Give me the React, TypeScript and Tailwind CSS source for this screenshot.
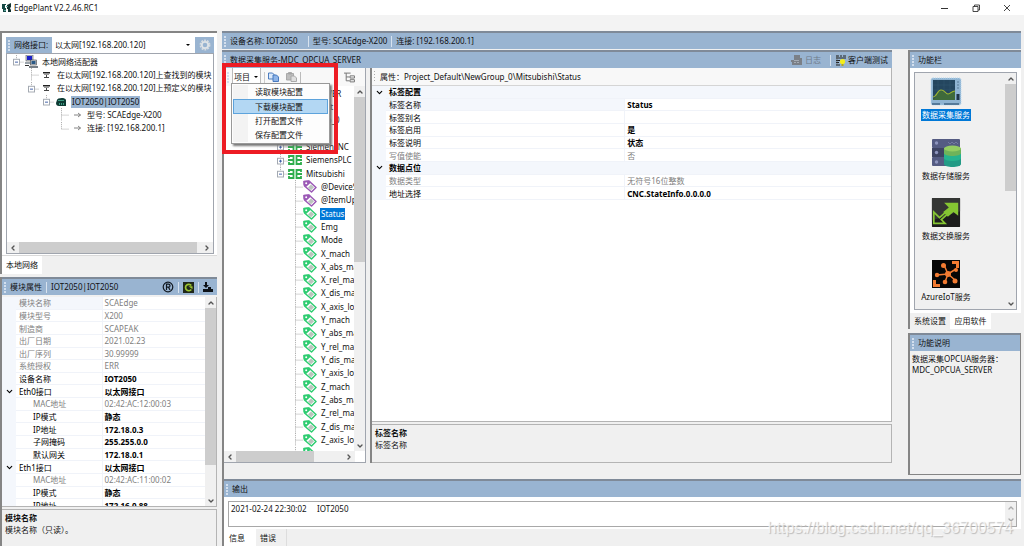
import { useState } from "react";
import type { ReactNode } from "react";
import { ChevronDown, ChevronLeft, ChevronRight, ChevronUp } from "lucide-react";

type Row = {
  label: string;
  value?: string;
  level?: number;
  group?: boolean;
  readOnly?: boolean;
  plain?: boolean;
  shade?: boolean;
};

type Node = {
  // one letter per column: v = line, t = branch, l = last branch, p = plus, m = minus, o = minus at the end
  lines: string;
  icon: ReactNode;
  text: string;
  selected?: "soft" | "strong";
};

/* ---------- icons ---------- */

function AppIcon() {
  return (
    <svg viewBox="0 0 10 10" className="size-[10px]" aria-hidden="true">
      <path d="M0 1h4v1H3v3h1v4H1V6H0z" fill="#164a45" />
      <path d="M5 2l4-2v4l-1 1 1 2v2H6V6H5z" fill="#12312f" />
      <path d="M4 3h2v1H4zM2 7h2v1H2z" fill="#5aa79d" />
    </svg>
  );
}

function NetworkIcon() {
  return (
    <svg viewBox="0 0 14 13" className="h-[13px] w-[14px]" aria-hidden="true">
      <rect x="2" y="0" width="7" height="6" fill="#c9cfd6" stroke="#555" strokeWidth="0.6" />
      <rect x="3" y="1" width="5" height="4" fill="#1a21c9" />
      <path d="M1 7h8v2H1z" fill="#9aa3ab" />
      <rect x="6.5" y="5" width="6" height="5" fill="#c9cfd6" stroke="#444" strokeWidth="0.6" />
      <rect x="7.5" y="6" width="4" height="3" fill="#2c5a86" />
      <path d="M5 11h9v2H5z" fill="#777f87" />
      <path d="M1 10.5h4" stroke="#333" />
    </svg>
  );
}

function PortIcon() {
  return (
    <svg viewBox="0 0 14 10" className="h-[10px] w-[14px]" aria-hidden="true">
      <path d="M4 2h7v1.500H4z" fill="#222" />
      <path d="M5 4h5v1H5z" fill="#999" />
      <path d="M7 5h1v2h2v1H5V7h2z" fill="#444" />
    </svg>
  );
}

function ModuleIcon() {
  return (
    <svg viewBox="0 0 14 12" className="h-[12px] w-[14px]" aria-hidden="true">
      <path d="M3 4c0-2 8-3 9 0v6H5c-2 0-3-1-3-3z" fill="#0d3b34" />
      <path d="M4 4h6v1H4zM5 7h1v2H5zM7 7h1v2H7zM9 7h1v2H9z" fill="#3f9c84" />
    </svg>
  );
}

function ArrowIcon() {
  return (
    <svg viewBox="0 0 14 10" className="h-[10px] w-[14px]" fill="none" stroke="#777" strokeWidth="0.9" aria-hidden="true">
      <path d="M5 5h6.500M9 3l2.500 2L9 7" />
    </svg>
  );
}

function DeviceIcon() {
  return (
    <svg viewBox="0 0 14 10" className="h-[10px] w-[14px]" fill="none" stroke="#2fae4d" strokeWidth="1.8" aria-hidden="true">
      <path d="M1 3V1h4.500v8H1V7M13 3V1H8.500v8H13V7M0 5h5M9 5h5" />
    </svg>
  );
}

function TagIcon({ color }: { color: string }) {
  return (
    <svg viewBox="0 0 14 13" className="h-[13px] w-[14px]" aria-hidden="true">
      <path d="M1 1.500L6 1l7 6.500L8.500 12 1.500 6z" fill="#fff" stroke={color} strokeWidth="1.500" strokeLinejoin="round" />
      <path d="M0.500 1L6 0.500l2 2L3 7 0.500 5z" fill={color} />
      <circle cx="3.200" cy="3.200" r="1" fill="#fff" />
      <path d="M8 4.500l3 2.700-3 3-3-2.700z" fill="#bcc4be" />
    </svg>
  );
}

function GearIcon() {
  return (
    <svg viewBox="0 0 12 12" className="size-[12px]" fill="none" aria-hidden="true">
      <circle cx="6" cy="6" r="4.700" stroke="#d7dce1" strokeWidth="1.500" strokeDasharray="1.900 1.050" />
      <circle cx="6" cy="6" r="3.200" stroke="#dfe3e7" strokeWidth="1.800" />
    </svg>
  );
}

function CopyIcon() {
  return (
    <svg viewBox="0 0 11 10" className="h-[10px] w-[11px]" fill="#d9e8fa" stroke="#3b6fb8" strokeWidth="0.9" aria-hidden="true">
      <path d="M0.500 1h4l1.500 1.500V7H0.500z" />
      <path d="M5 3h3.500L10.500 5v4.500H5z" fill="#8db4e8" />
    </svg>
  );
}

function PasteIcon() {
  return (
    <svg viewBox="0 0 11 10" className="h-[10px] w-[11px]" fill="#bdbdbd" stroke="#a3a3a3" strokeWidth="0.9" aria-hidden="true">
      <path d="M0.500 1.500h7V8h-7zM2.500 0.500h3v1.500h-3z" />
      <path d="M5 4h3.500L10.500 6v3.500H5z" fill="#dedede" />
    </svg>
  );
}

function TreeToolIcon() {
  return (
    <svg viewBox="0 0 10 10" className="size-[11px]" fill="none" stroke="#777" strokeWidth="0.9" aria-hidden="true">
      <path d="M0 1h6M2 1v7h3M2 4.500h3M5.500 3.500h4v2h-4zM5.500 7h4v2h-4z" />
    </svg>
  );
}

function LogIcon() {
  return (
    <svg viewBox="0 0 11 10" className="h-[10px] w-[11px]" aria-hidden="true">
      <path d="M3 0h6v3h2v7H1V7H0V5h3z" fill="#7b8087" />
      <path d="M3 5.500h5M3 7.500h2m1 0h2" stroke="#a5acb5" />
    </svg>
  );
}

function ClientIcon() {
  return (
    <svg viewBox="0 0 11 11" className="size-[11px]" aria-hidden="true">
      <path d="M1 1h3M5 1h2M8 1h3M1 3h10M1 5.500h4M1 7.500h3M1 10h4" stroke="#222" strokeWidth="1.100" />
      <path d="M2 0v10" stroke="#555" strokeWidth="0.600" />
      <circle cx="7.500" cy="6.500" r="2.600" fill="#f4ee1b" />
      <path d="M6.500 9h2v2h-2z" fill="#b5a51b" />
    </svg>
  );
}

function RegisteredIcon() {
  return (
    <svg viewBox="0 0 12 12" className="size-[12px]" fill="none" stroke="#101820" strokeWidth="1.200" aria-hidden="true">
      <circle cx="6" cy="6" r="4.800" />
      <path d="M4.500 9V3.200h2a1.500 1.500 0 010 3h-2m2 0L8 9" />
    </svg>
  );
}

function RefreshIcon() {
  return (
    <svg viewBox="0 0 11 11" className="size-[11px]" aria-hidden="true">
      <rect width="11" height="11" fill="#20281a" />
      <path d="M8.300 3.600A3.200 3.200 0 108.300 7.500" fill="none" stroke="#9bc531" strokeWidth="1.700" />
      <path d="M5.500 4.200h4v3z" fill="#9bc531" />
    </svg>
  );
}

function DownloadIcon() {
  return (
    <svg viewBox="0 0 10 10" className="size-[10px]" fill="#0d1218" aria-hidden="true">
      <path d="M2 0h2v3h2L3 6 0 3h2zM0 7h10v3H0zM5 5h3v2H5z" />
    </svg>
  );
}

function ScopeIcon() {
  return (
    <svg viewBox="0 0 32 30" className="h-[30px] w-[32px]" aria-hidden="true">
      <rect x="1" y="1" width="30" height="27" rx="2" fill="#8fb4d2" stroke="#b5d6ee" strokeDasharray="1 1" />
      <rect x="3" y="3" width="22" height="20" fill="#24465f" />
      <path d="M3 8h22M3 13h22M3 18h22M8 3v20M14 3v20M20 3v20" stroke="#31566f" strokeWidth="0.600" />
      <path d="M3 22c4-1 3-8 8-8 4 0 3 4 7 3 3-1 3-3 7-3v9H3z" fill="#3f6a3a" />
      <path d="M3 20c4 0 4-7 8-7s4 4 7 4 3-3 7-3" fill="none" stroke="#9db62f" strokeWidth="1.200" />
      <path d="M27 5h2M27 8h2M27 11h2" stroke="#587b97" />
      <rect x="26.500" y="17" width="3" height="6" fill="#1f3548" />
      <path d="M2 27h8M14 27h15" stroke="#416685" strokeWidth="1.500" />
    </svg>
  );
}

function StorageIcon() {
  return (
    <svg viewBox="0 0 32 30" className="h-[30px] w-[32px]" aria-hidden="true">
      <rect x="2" y="1" width="28" height="9" rx="1" fill="#545b82" />
      <rect x="2" y="10" width="28" height="9" fill="#3d4362" />
      <rect x="2" y="19" width="28" height="9" rx="1" fill="#545b82" />
      <path d="M18 4l2 2 2-2 2 2 2-2 2 2" fill="none" stroke="#7279a0" />
      <g fill="#8d94bd">
        <circle cx="6.500" cy="5" r="1.700" />
        <circle cx="6.500" cy="14.500" r="1.700" />
        <circle cx="6.500" cy="24" r="1.700" />
      </g>
      <path d="M14 11v15c0 4 17 4 17 0V11z" fill="#239b86" />
      <path d="M14 10v10c0 4 17 4 17 0V10z" fill="#26b38f" />
      <path d="M14 10v5c0 4 17 4 17 0v-5z" fill="#6fb35a" />
      <ellipse cx="22.500" cy="10.500" rx="8.500" ry="3" fill="#94cc62" />
    </svg>
  );
}

function ExchangeIcon() {
  return (
    <svg viewBox="0 0 32 32" className="h-[30px] w-[32px]" aria-hidden="true">
      <rect x="1" y="0" width="30" height="31" rx="1" fill="#1c1d1c" />
      <path d="M1 0h30v14L1 24z" fill="#343634" />
      <path d="M14 5h15v14l-5-4-6 5-5-5 6-5z" fill="#85c632" />
      <path d="M3 15v12h12l-4-4 8-7-2-2-8 7z" fill="none" stroke="#85c632" strokeWidth="1.800" />
    </svg>
  );
}

function AzureIcon() {
  return (
    <svg viewBox="0 0 32 30" className="h-[30px] w-[32px]" aria-hidden="true">
      <rect x="2" y="1" width="28" height="28" fill="#060606" />
      <g stroke="#f27b32" strokeWidth="1.500">
        <path d="M18 15L14 6M18 15L7 16M18 15l8-5M18 15l-3 8M18 15l7 6" />
      </g>
      <g fill="#f27b32">
        <circle cx="18" cy="15" r="3" />
        <circle cx="13.500" cy="6.500" r="2.500" />
        <circle cx="7" cy="16" r="2.200" />
        <circle cx="26" cy="11" r="2" />
        <circle cx="15" cy="23" r="2.300" />
        <circle cx="25" cy="22" r="2.500" />
        <path d="M22 2h7v7h-3V5h-4zM3 21h3v4h4v3H3z" />
      </g>
    </svg>
  );
}

/* ---------- shared parts ---------- */

function Grip() {
  return (
    <svg viewBox="0 0 2 11" className="h-[11px] w-[2px] shrink-0" fill="#d3dfee" aria-hidden="true">
      <path d="M0 0h2v2H0zM0 3h2v2H0zM0 6h2v2H0zM0 9h2v2H0z" />
    </svg>
  );
}

function PanelHeader({ children }: { children: ReactNode }) {
  return (
    <header className="flex h-[18px] shrink-0 items-center gap-1 border-t-2 border-[#7f8a98] bg-[#99b4d1] pr-1 pl-0.5 whitespace-nowrap">
      <Grip />
      {children}
    </header>
  );
}

function Divider() {
  return <span className="h-[11px] w-px shrink-0 bg-[#d8e3ef]" />;
}

function VerticalScroll({ thumb }: { thumb: string }) {
  return (
    <div className="flex w-[11px] shrink-0 flex-col items-center bg-[#f0f0f0] text-[#555]">
      <button type="button" aria-label="向上滚动" className="flex h-[11px] items-center">
        <ChevronUp size={8} strokeWidth={4} />
      </button>
      <div className="flex min-h-0 w-full flex-1 flex-col">
        <div className={`w-full bg-[#cdcdcd] ${thumb}`} />
      </div>
      <button type="button" aria-label="向下滚动" className="flex h-[11px] items-center">
        <ChevronDown size={8} strokeWidth={4} />
      </button>
    </div>
  );
}

function HorizontalScroll({ thumb }: { thumb: string }) {
  return (
    <div className="flex h-[11px] shrink-0 items-center bg-[#f0f0f0] text-[#555]">
      <button type="button" aria-label="向左滚动" className="flex w-[12px] justify-center">
        <ChevronLeft size={8} strokeWidth={4} />
      </button>
      <div className="flex h-full min-w-0 flex-1">
        <div className={`h-full bg-[#cdcdcd] ${thumb}`} />
      </div>
      <button type="button" aria-label="向右滚动" className="flex w-[12px] justify-center">
        <ChevronRight size={8} strokeWidth={4} />
      </button>
    </div>
  );
}

function TreeCell({ kind }: { kind: string }) {
  const box = kind === "p" || kind === "m" || kind === "o";
  const below = kind === "v" || kind === "t" || kind === "p" || kind === "m";
  return (
    <svg viewBox="0 0 15 14" preserveAspectRatio="none" className="h-full w-[15px] shrink-0" fill="none" aria-hidden="true">
      {kind !== " " && (
        <g stroke="#a8a8a8" strokeDasharray="1 1">
          <path d={below ? "M7.500 0v14" : "M7.500 0v7"} />
          {kind !== "v" && <path d="M7.500 7.500H15" />}
        </g>
      )}
      {box && <rect x="4.500" y="4.500" width="6" height="6" fill="#fff" stroke="#a3a9b1" />}
      {box && <path d={kind === "p" ? "M6 7.500h3M7.500 6v3" : "M6 7.500h3"} stroke="#4361a8" />}
    </svg>
  );
}

function Tree({ nodes, className }: { nodes: Node[]; className: string }) {
  return (
    <ul className={`grid auto-rows-fr whitespace-nowrap ${className}`}>
      {nodes.map((node, i) => (
        <li key={i} className="flex items-center">
          {node.lines.split("").map((kind, j) => (
            <TreeCell key={j} kind={kind} />
          ))}
          <span className="w-[15px] shrink-0">{node.icon}</span>
          <span
            className={
              node.selected === "strong"
                ? "ml-0.5 bg-[#0078d7] px-px text-white"
                : node.selected === "soft"
                  ? "ml-0.5 bg-[#99b4d1] px-px"
                  : "px-[3px]"
            }
          >
            {node.text}
          </span>
        </li>
      ))}
    </ul>
  );
}

function PropertyTable({ rows, className, labelCol }: { rows: Row[]; className: string; labelCol: string }) {
  return (
    <table className={`w-full table-fixed border-collapse leading-[11px] whitespace-nowrap ${className}`}>
      <colgroup>
        <col className="w-[14px]" />
        <col className={labelCol} />
        <col />
      </colgroup>
      <tbody>
        {rows.map((row, i) => {
          const tone = row.readOnly ? "text-[#808080]" : "text-black";
          const head = row.group && !row.value;
          return (
            <tr key={i} className={tone}>
              <td className="bg-[#f4f7fc] p-0">
                {row.group && (
                  <button type="button" aria-label="折叠" className="flex w-full justify-center">
                    <ChevronDown size={9} strokeWidth={3} />
                  </button>
                )}
              </td>
              <th
                scope="row"
                colSpan={head ? 2 : 1}
                className={`border-b border-[#f0f3f9] p-0 text-left ${row.level ? "pl-[17px]" : "pl-[3px]"} ${head ? "font-bold" : "font-normal"} ${row.shade || head ? "bg-[#f4f7fc]" : ""}`}
              >
                {row.label}
              </th>
              {!head && (
                <td className={`border-b border-l border-[#f0f3f9] p-0 pl-0.5 ${row.readOnly || row.plain ? "" : "font-bold"}`}>
                  {row.value}
                </td>
              )}
            </tr>
          );
        })}
      </tbody>
    </table>
  );
}

/* ---------- data ---------- */

const networkNodes: Node[] = [
  { lines: "o", icon: <NetworkIcon />, text: "本地网络适配器" },
  { lines: " t", icon: <PortIcon />, text: "在以太网[192.168.200.120]上查找到的模块" },
  { lines: " o", icon: <PortIcon />, text: "在以太网[192.168.200.120]上预定义的模块" },
  { lines: "  o", icon: <ModuleIcon />, text: "IOT2050|IOT2050", selected: "soft" },
  { lines: "   t", icon: <ArrowIcon />, text: "型号: SCAEdge-X200" },
  { lines: "   l", icon: <ArrowIcon />, text: "连接: [192.168.200.1]" },
];

const tags = [
  "Status", "Emg", "Mode",
  "X_mach", "X_abs_mach", "X_rel_mach", "X_dis_mach", "X_axis_load",
  "Y_mach", "Y_abs_mach", "Y_rel_mach", "Y_dis_mach", "Y_axis_load",
  "Z_mach", "Z_abs_mach", "Z_rel_mach", "Z_dis_mach", "Z_axis_load",
  "",
];

const serviceNodes: Node[] = [
  { lines: "o", icon: <DeviceIcon />, text: "MDC_OPCUA_SERVER" },
  { lines: " o", icon: <DeviceIcon />, text: "Project_Default" },
  { lines: "  o", icon: <DeviceIcon />, text: "NewGroup_0" },
  { lines: "   p", icon: <DeviceIcon />, text: "" },
  { lines: "   p", icon: <DeviceIcon />, text: "SiemensNC" },
  { lines: "   p", icon: <DeviceIcon />, text: "SiemensPLC" },
  { lines: "   o", icon: <DeviceIcon />, text: "Mitsubishi" },
  { lines: "    t", icon: <TagIcon color="#9b59b6" />, text: "@DeviceState" },
  { lines: "    t", icon: <TagIcon color="#9b59b6" />, text: "@ItemUpdate" },
  ...tags.map((text): Node => ({
    lines: "    t",
    icon: <TagIcon color="#2ecc71" />,
    text,
    selected: text === "Status" ? "strong" : undefined,
  })),
];

const moduleRows: Row[] = [
  { label: "模块名称", value: "SCAEdge", readOnly: true, shade: true },
  { label: "模块型号", value: "X200", readOnly: true },
  { label: "制造商", value: "SCAPEAK", readOnly: true },
  { label: "出厂日期", value: "2021.02.23", readOnly: true },
  { label: "出厂序列", value: "30.99999", readOnly: true },
  { label: "系统授权", value: "ERR", readOnly: true },
  { label: "设备名称", value: "IOT2050" },
  { label: "Eth0接口", value: "以太网接口", group: true },
  { label: "MAC地址", value: "02:42:AC:12:00:03", level: 1, readOnly: true },
  { label: "IP模式", value: "静态", level: 1 },
  { label: "IP地址", value: "172.18.0.3", level: 1 },
  { label: "子网掩码", value: "255.255.0.0", level: 1 },
  { label: "默认网关", value: "172.18.0.1", level: 1 },
  { label: "Eth1接口", value: "以太网接口", group: true },
  { label: "MAC地址", value: "02:42:AC:11:00:02", level: 1, readOnly: true },
  { label: "IP模式", value: "静态", level: 1 },
  { label: "IP地址", value: "172.16.0.88", level: 1 },
];

const tagRows: Row[] = [
  { label: "标签配置", group: true },
  { label: "标签名称", value: "Status", shade: true },
  { label: "标签别名", value: "" },
  { label: "标签启用", value: "是" },
  { label: "标签说明", value: "状态" },
  { label: "写值使能", value: "否", readOnly: true },
  { label: "数据点位", group: true },
  { label: "数据类型", value: "无符号16位整数", readOnly: true },
  { label: "地址选择", value: "CNC.StateInfo.0.0.0.0" },
];

const services = [
  { name: "数据采集服务", icon: <ScopeIcon /> },
  { name: "数据存储服务", icon: <StorageIcon /> },
  { name: "数据交换服务", icon: <ExchangeIcon /> },
  { name: "AzureIoT服务", icon: <AzureIcon /> },
];

const menuItems = ["读取模块配置", "下载模块配置", "打开配置文件", "保存配置文件"];

/* ---------- panels ---------- */

function TitleBar() {
  return (
    <div className="flex h-[15px] shrink-0 items-center bg-white pr-3 pl-0.5">
      <AppIcon />
      <h1 className="ml-0.5 flex-1">EdgePlant V2.2.46.RC1</h1>
      <div className="flex gap-[21px] text-[#333]">
        <button type="button" aria-label="最小化">
          <svg viewBox="0 0 10 8" className="h-2 w-2.5" stroke="currentColor"><path d="M1 4.500h7" /></svg>
        </button>
        <button type="button" aria-label="还原">
          <svg viewBox="0 0 10 8" className="h-2 w-2.5" fill="none" stroke="currentColor" strokeWidth="0.900">
            <path d="M2 2.500h5v5H2zM3.500 2.500v-1.500h5v5H7" />
          </svg>
        </button>
        <button type="button" aria-label="关闭">
          <svg viewBox="0 0 10 8" className="h-2 w-2.5" stroke="currentColor" strokeWidth="0.900"><path d="M2 1l6 6M8 1L2 7" /></svg>
        </button>
      </div>
    </div>
  );
}

function NetworkPanel() {
  return (
    <section className="flex min-h-0 flex-1 flex-col border-t-2 border-l-2 border-[#858585]">
      <div className="flex min-h-0 flex-1 flex-col border-b border-[#d9d9d9] bg-white pt-1 pr-[3px] pb-px pl-1">
        <div className="flex h-4 shrink-0 items-center">
          <label htmlFor="adapter" className="flex h-full w-[46px] items-center gap-1 bg-[#99b4d1] pl-0.5 whitespace-nowrap">
            <Grip />
            网络接口:
          </label>
          <div className="relative h-full flex-1">
            <select id="adapter" className="h-full w-full appearance-none bg-white pl-[3px] leading-[14px] outline-none">
              <option>以太网[192.168.200.120]</option>
            </select>
            <span className="pointer-events-none absolute top-[7px] right-[5px] border-x-2 border-t-2 border-x-transparent border-t-black" />
          </div>
          <button type="button" aria-label="网络设置" className="flex h-full w-[19px] items-center justify-center bg-[#99b4d1]">
            <GearIcon />
          </button>
        </div>
        <div className="flex min-h-0 flex-1 flex-col overflow-hidden border border-[#a0a5ae]">
          <div className="min-h-0 flex-1 overflow-hidden pt-px pl-0.5">
            <Tree nodes={networkNodes} className="h-20" />
          </div>
          <HorizontalScroll thumb="w-[98%]" />
        </div>
      </div>
      <div className="flex h-[18px] shrink-0">
        <button type="button" className="bg-white px-1">本地网络</button>
      </div>
    </section>
  );
}

function ModulePanel() {
  return (
    <section className="flex h-[269px] shrink-0 flex-col border-l-2 border-[#858585]">
      <PanelHeader>
        <h2>模块属性</h2>
        <Divider />
        <span className="flex-1">IOT2050|IOT2050</span>
        <button type="button" aria-label="注册"><RegisteredIcon /></button>
        <Divider />
        <button type="button" aria-label="刷新"><RefreshIcon /></button>
        <Divider />
        <button type="button" aria-label="下载"><DownloadIcon /></button>
      </PanelHeader>
      <div className="mt-0.5 flex min-h-0 flex-1 border-r border-b border-[#b4b4b4] bg-white">
        <div className="min-w-0 flex-1 overflow-hidden">
          <PropertyTable rows={moduleRows} className="h-[215px]" labelCol="w-[86px]" />
        </div>
        <VerticalScroll thumb="h-[84%]" />
      </div>
      <div className="mt-0.5 h-[37px] shrink-0 border-t border-r border-[#b4b4b4] px-[3px] pt-0.5 leading-[12px]">
        <p className="font-bold">模块名称</p>
        <p>模块名称（只读）。</p>
      </div>
    </section>
  );
}

function ServicePanel() {
  const [active, setActive] = useState(1);

  return (
    <section className="relative flex min-w-0 flex-1 flex-col">
      <PanelHeader>
        <h2 className="flex-1">数据采集服务-MDC_OPCUA_SERVER</h2>
        <button type="button" disabled className="flex items-center gap-[3px] text-[#6f7b89]">
          <LogIcon />
          日志
        </button>
        <span className="w-px" />
        <Divider />
        <button type="button" className="flex items-center gap-0.5">
          <ClientIcon />
          客户端测试
        </button>
      </PanelHeader>

      <div className="flex min-h-0 flex-1 gap-1 border-l-2 border-[#858585]">
        <div className="flex w-[142px] shrink-0 flex-col border-r border-b border-[#a0a5ae] bg-white">
          <div className="relative flex h-[18px] shrink-0 items-center gap-[3px] bg-[#f8f8f8] px-[3px]">
            <Grip />
            <button type="button" className="flex h-full w-[29px] items-center gap-1 border-x border-[#bbb] bg-white pl-px whitespace-nowrap">
              项目
              <span className="border-x-2 border-t-2 border-x-transparent border-t-black" />
            </button>
            <span className="h-[11px] w-px bg-[#ccc]" />
            <button type="button" aria-label="复制"><CopyIcon /></button>
            <span className="w-px" />
            <button type="button" aria-label="粘贴" disabled><PasteIcon /></button>
            <span className="h-[11px] w-px bg-[#bbb]" />
            <span className="flex-1" />
            <button type="button" aria-label="展开"><TreeToolIcon /></button>
            <span className="w-1" />
            <ul className="absolute top-[15px] left-[7px] z-10 w-[99px] border border-[#999] bg-[#fdfdfd] p-px shadow-[2px_2px_2px_#777]">
              {menuItems.map((item, i) => (
                <li key={item}>
                  <button
                    type="button"
                    onMouseEnter={() => setActive(i)}
                    className={
                      i === active
                        ? "block h-[15px] w-full border border-[#5da3dc] bg-[#b3d7f3] pl-[21px] text-left"
                        : "block h-[14px] w-full border-l-[15px] border-[#f3f3f3] pl-[7px] text-left"
                    }
                  >
                    {item}
                  </button>
                </li>
              ))}
            </ul>
          </div>
          <div className="flex min-h-0 flex-1">
            <div className="min-w-0 flex-1 overflow-hidden pt-px pl-1">
              <Tree nodes={serviceNodes} className="h-[373px]" />
            </div>
            <VerticalScroll thumb="h-[48%]" />
          </div>
          <div className="pr-2.5">
            <HorizontalScroll thumb="w-[73%]" />
          </div>
        </div>

        <div className="flex min-w-0 flex-1 flex-col border-l-2 border-[#858585]">
          <div className="flex min-h-0 flex-1 flex-col border-r border-b border-[#b4b4b4] bg-white">
            <div className="flex h-[18px] shrink-0 items-center gap-1 border-b border-[#d5d5d5] bg-[#f8f8f8] px-0.5">
              <svg viewBox="0 0 2 11" className="h-[11px] w-[2px]" fill="#aaa"><path d="M0 0h1v1H0zM0 3h1v1H0zM0 6h1v1H0zM0 9h1v1H0z" /></svg>
              <h3>属性：Project_Default\NewGroup_0\Mitsubishi\Status</h3>
            </div>
            <PropertyTable rows={tagRows} className="h-[114px]" labelCol="w-[46%]" />
          </div>
          <div className="mt-0.5 h-[39px] shrink-0 border border-l-0 border-[#b4b4b4] px-[3px] pt-0.5 leading-[12px]">
            <p className="font-bold">标签名称</p>
            <p>标签名称</p>
          </div>
        </div>
      </div>
      <div className="h-4 shrink-0 border-l-2 border-[#858585]" />
      <div className="pointer-events-none absolute top-[13px] left-0 z-20 h-[91px] w-[116px] border-4 border-[#ed1c24]" />
    </section>
  );
}

function FunctionPanel() {
  return (
    <aside className="flex w-[113px] shrink-0 flex-col">
      <section className="flex h-[279px] flex-col border-l-2 border-[#858585]">
        <PanelHeader>
          <h2>功能栏</h2>
        </PanelHeader>
        <div className="flex min-h-0 flex-1 flex-col bg-white px-1 pt-1 pb-[3px]">
          <div className="flex min-h-0 flex-1 border border-[#a0a5ae] bg-[#f0f0f0]">
            <div className="min-w-0 flex-1 overflow-hidden">
              <ul className="grid h-[246px] w-[62px] auto-rows-fr pt-1">
                {services.map((service, i) => (
                  <li key={service.name}>
                    <button type="button" className="flex w-full flex-col items-center gap-0.5 whitespace-nowrap">
                      {service.icon}
                      <span className={i === 0 ? "bg-[#0078d7] px-px text-white" : "px-px"}>{service.name}</span>
                    </button>
                  </li>
                ))}
              </ul>
            </div>
            <VerticalScroll thumb="h-[50%]" />
          </div>
        </div>
        <div className="flex h-4 shrink-0 whitespace-nowrap">
          <button type="button" className="w-10 text-center">系统设置</button>
          <button type="button" className="w-[41px] bg-white text-center">应用软件</button>
        </div>
      </section>
      <section className="mt-1 mb-1 flex min-h-0 flex-1 flex-col border-r border-b border-l-2 border-[#858585]">
        <PanelHeader>
          <h2>功能说明</h2>
        </PanelHeader>
        <p className="px-0.5 pt-0.5 leading-[11px]">
          数据采集OPCUA服务器：
          <br />
          MDC_OPCUA_SERVER
        </p>
      </section>
    </aside>
  );
}

function OutputPanel() {
  return (
    <section className="relative flex h-[67px] shrink-0 flex-col border-l-2 border-[#858585]">
      <PanelHeader>
        <h2>输出</h2>
      </PanelHeader>
      <div className="bg-white p-1 pb-0.5">
        <div className="flex h-[26px] border border-[#a8a8a8]">
          <textarea
            aria-label="输出信息"
            readOnly
            defaultValue={"2021-02-24 22:30:02     IOT2050"}
            className="min-w-0 flex-1 resize-none overflow-hidden bg-white px-0.5 leading-[13px] outline-none"
          />
          <div className="flex w-[11px] flex-col items-center justify-between bg-[#f0f0f0] py-0.5 text-[#aaa]">
            <ChevronUp size={8} strokeWidth={4} />
            <ChevronDown size={8} strokeWidth={4} />
          </div>
        </div>
      </div>
      <div className="flex flex-1">
        <button type="button" className="w-8 bg-white pl-[5px] text-left">信息</button>
        <button type="button" className="w-[31px] border-r border-[#ddd] pl-1 text-left">错误</button>
      </div>
      <p className="pointer-events-none absolute right-2 bottom-2 font-['Liberation_Sans',sans-serif] text-[16px] leading-5 text-white/70 [text-shadow:1px_1px_1px_#bbb]">
        https://blog.csdn.net/qq_36700574
      </p>
    </section>
  );
}

export default function App() {
  return (
    <div className="flex h-screen flex-col overflow-hidden bg-[#f0f0f0] font-['Noto_Sans','Noto_Sans_CJK_SC',sans-serif] text-[8px] leading-[12px] text-[#111]">
      <TitleBar />
      <div className="h-4 shrink-0 bg-[#f3f3f3]" />
      <main className="flex min-h-0 flex-1 gap-[5px] pr-[3px]">
        <div className="flex w-[217px] shrink-0 flex-col gap-[3px]">
          <NetworkPanel />
          <ModulePanel />
        </div>
        <div className="flex min-w-0 flex-1 flex-col">
          <PanelHeader>
            <span>设备名称: IOT2050</span>
            <span className="w-0.5" />
            <Divider />
            <span>型号: SCAEdge-X200</span>
            <Divider />
            <span>连接: [192.168.200.1]</span>
          </PanelHeader>
          <div className="mt-px flex min-h-0 flex-1 gap-4">
            <ServicePanel />
            <FunctionPanel />
          </div>
          <OutputPanel />
        </div>
      </main>
    </div>
  );
}
